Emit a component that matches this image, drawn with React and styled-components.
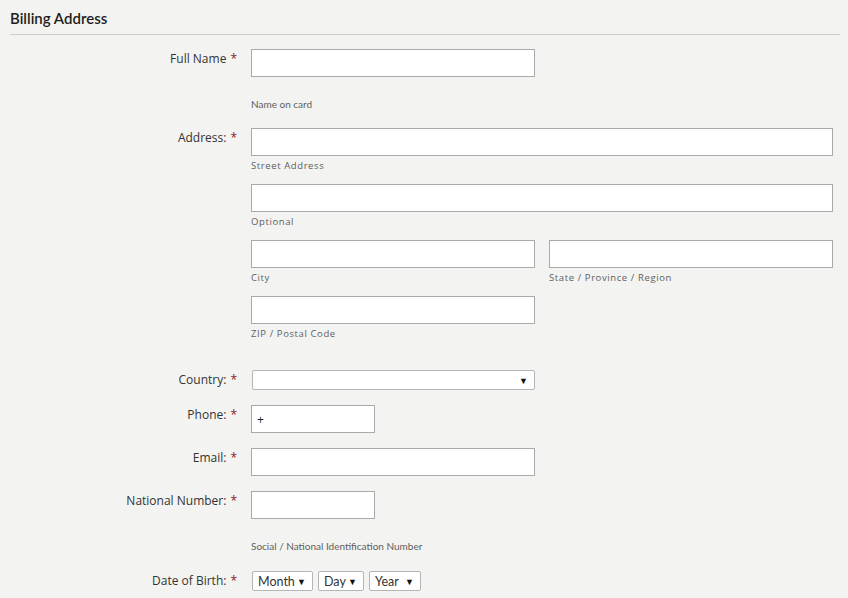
import React from 'react';
import styled, { createGlobalStyle } from 'styled-components';

const GlobalStyle = createGlobalStyle`
  html, body {
    margin: 0;
    padding: 0;
    background-color: #f3f3f1;
  }
  body {
    font-family: 'Open Sans', 'Liberation Sans', sans-serif;
    color: #333;
  }
`;

const Page = styled.div`
  padding: 0 8px 0 10px;
`;

const Title = styled.h2`
  margin: 0;
  padding-top: 8px;
  font-family: Lato, 'Liberation Sans', sans-serif;
  font-size: 15px;
  font-weight: 600;
  line-height: 20px;
  color: #1e1e1e;
`;

const Line = styled.div`
  height: 1px;
  margin-top: 6px;
  background-color: #cfcfcd;
`;

const Form = styled.div`
  display: flex;
  flex-direction: column;
  padding-top: 14px;
`;

const Row = styled.div`
  display: grid;
  grid-template-columns: 227px 1fr;
  column-gap: 14px;
  margin-top: ${props => props.gap || 0}px;
`;

const Label = styled.label`
  padding-top: 1px;
  text-align: right;
  font-size: 12px;
  line-height: 18px;
  color: #333;
  white-space: nowrap;
`;

const Star = styled.span`
  color: #8a1c1c;
  margin-left: 4px;
`;

const Fields = styled.div`
  display: flex;
  flex-direction: column;
  gap: ${props => props.gap || 10}px;
`;

const Pair = styled.div`
  display: flex;
  gap: 14px;
`;

const Field = styled.div`
  display: flex;
  flex-direction: column;
  width: ${props => props.width || '284px'};
`;

const Input = styled.input`
  box-sizing: border-box;
  width: ${props => props.width || '100%'};
  height: 28px;
  margin: 0;
  padding: 0 5px;
  border: 1px solid #a9a9a9;
  background-color: #fff;
  font-family: 'Open Sans', 'Liberation Sans', sans-serif;
  font-size: 12px;
  color: #222;
  outline: none;
`;

const Hint = styled.div`
  margin-top: ${props => props.top || 2}px;
  font-family: ${props => props.plain ? "Lato, 'Liberation Sans', sans-serif" : "'Open Sans', 'Liberation Sans', sans-serif"};
  font-size: ${props => props.plain ? '10px' : '9.5px'};
  letter-spacing: ${props => props.plain ? '0' : '0.6px'};
  line-height: 16px;
  color: #606060;
`;

const Selects = styled.div`
  display: flex;
  gap: 5px;
  padding-left: 1px;
`;

const Select = styled.div`
  box-sizing: border-box;
  display: flex;
  align-items: center;
  justify-content: space-between;
  width: ${props => props.width};
  height: 20px;
  padding: 0 6px 0 5px;
  border: 1px solid #b5b5b5;
  border-radius: 2px;
  background-color: #fff;
  font-family: Lato, 'Liberation Sans', sans-serif;
  font-size: 12.5px;
  color: #333;
`;

const Arrow = styled.span`
  font-size: 9px;
  color: #111;
  line-height: 1;
`;

const Required = ({ children }) => (
  <Label>
    {children}
    <Star>*</Star>
  </Label>
);

export default function App() {
  return (
    <Page>
      <GlobalStyle />
      <Title>Billing Address</Title>
      <Line />
      <Form>
        <Row>
          <Required>Full Name</Required>
          <Fields>
            <Field>
              <Input />
              <Hint plain top={19}>Name on card</Hint>
            </Field>
          </Fields>
        </Row>

        <Row gap={16}>
          <Required>Address:</Required>
          <Fields>
            <Field width="582px">
              <Input />
              <Hint>Street Address</Hint>
            </Field>
            <Field width="582px">
              <Input />
              <Hint>Optional</Hint>
            </Field>
            <Pair>
              <Field>
                <Input />
                <Hint>City</Hint>
              </Field>
              <Field>
                <Input />
                <Hint>State / Province / Region</Hint>
              </Field>
            </Pair>
            <Field>
              <Input />
              <Hint>ZIP / Postal Code</Hint>
            </Field>
          </Fields>
        </Row>

        <Row gap={28}>
          <Required>Country:</Required>
          <Selects>
            <Select width="283px">
              <span />
              <Arrow>▼</Arrow>
            </Select>
          </Selects>
        </Row>

        <Row gap={15}>
          <Required>Phone:</Required>
          <Fields>
            <Input width="124px" defaultValue="+" />
          </Fields>
        </Row>

        <Row gap={15}>
          <Required>Email:</Required>
          <Fields>
            <Input width="284px" />
          </Fields>
        </Row>

        <Row gap={15}>
          <Required>National Number:</Required>
          <Fields>
            <Field width="284px">
              <Input width="124px" />
              <Hint plain top={19}>Social / National Identification Number</Hint>
            </Field>
          </Fields>
        </Row>

        <Row gap={17}>
          <Required>Date of Birth:</Required>
          <Selects>
            <Select width="61px">
              Month
              <Arrow>▼</Arrow>
            </Select>
            <Select width="46px">
              Day
              <Arrow>▼</Arrow>
            </Select>
            <Select width="52px">
              Year
              <Arrow>▼</Arrow>
            </Select>
          </Selects>
        </Row>
      </Form>
    </Page>
  );
}
